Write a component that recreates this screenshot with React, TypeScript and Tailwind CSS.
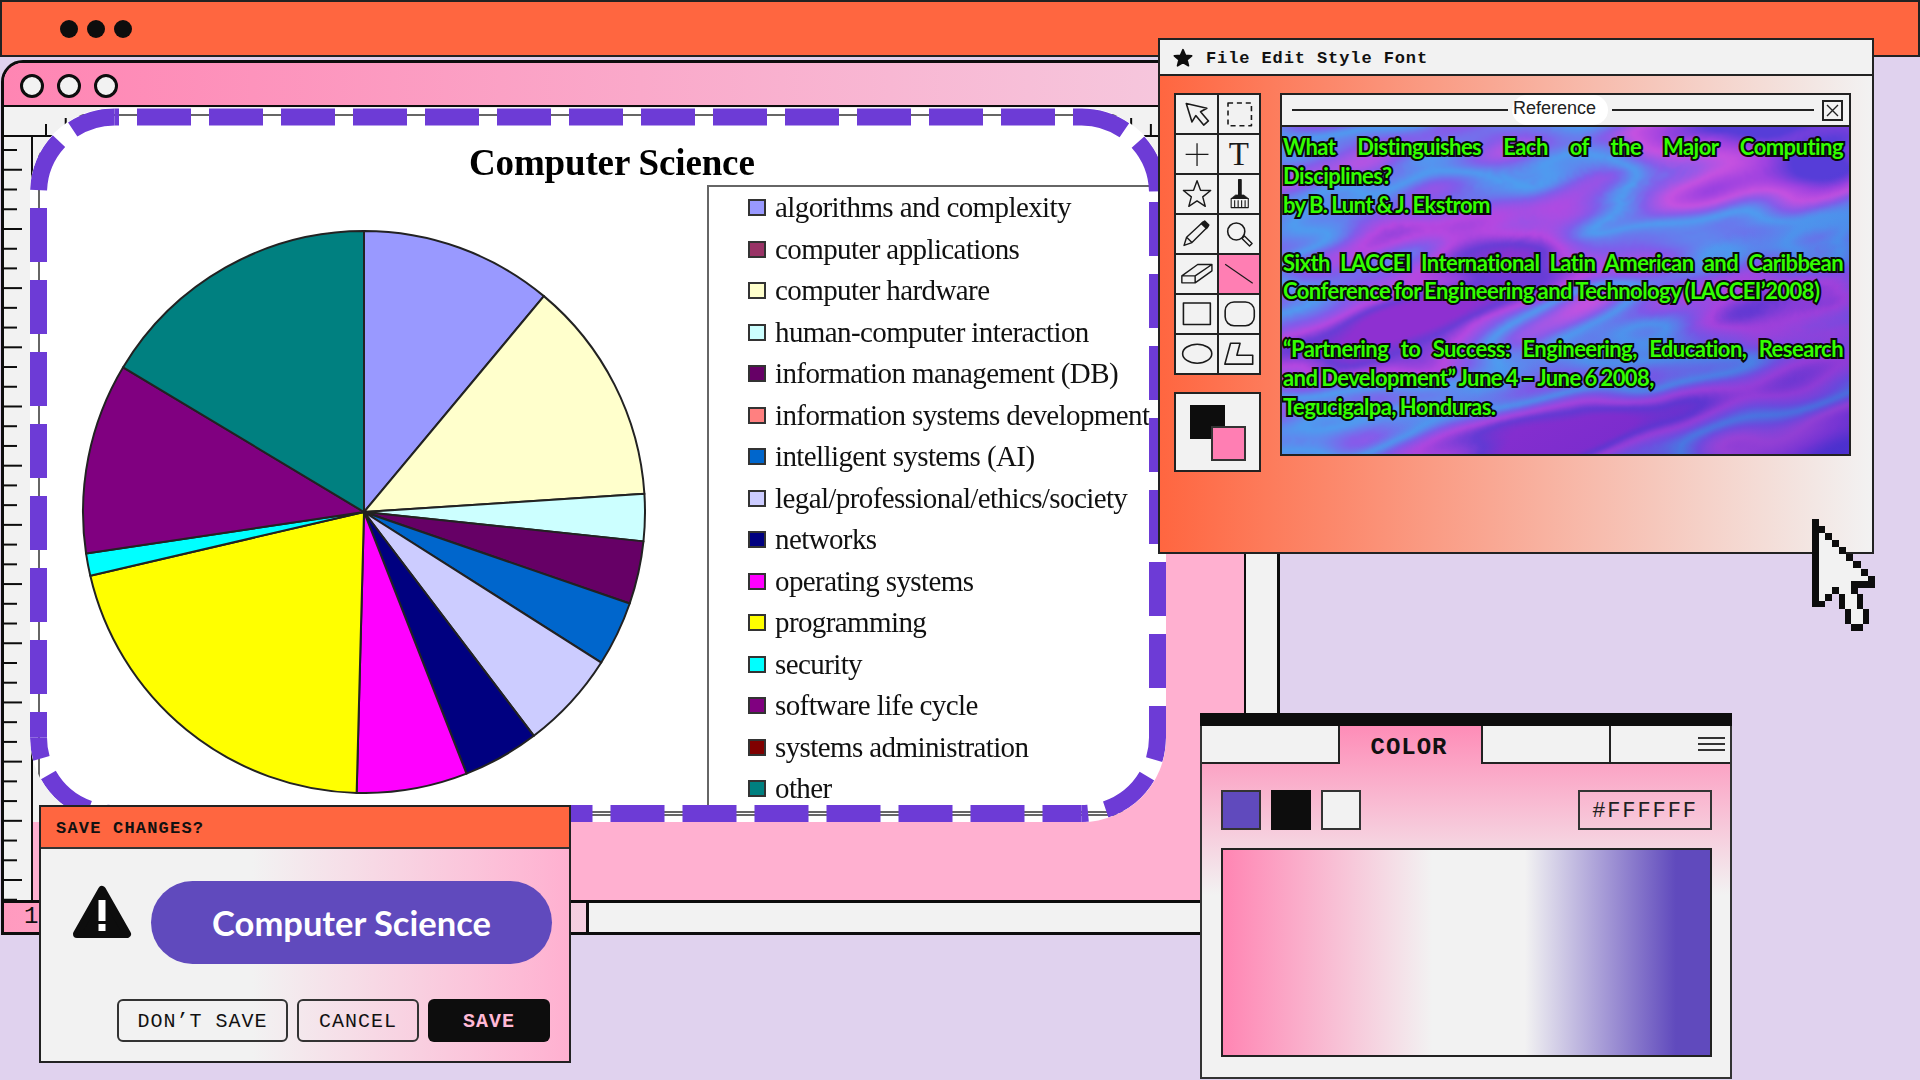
import type { ReactNode } from "react";

const slices = [
  { to: 39.8, color: "#9999FF" },
  { to: 86.3, color: "#FFFFCC" },
  { to: 96, color: "#CCFFFF" },
  { to: 109, color: "#660066" },
  { to: 122.4, color: "#0066CC" },
  { to: 142.8, color: "#CCCCFF" },
  { to: 158.6, color: "#000080" },
  { to: 181.5, color: "#FF00FF" },
  { to: 256.9, color: "#FFFF00" },
  { to: 261.5, color: "#00FFFF" },
  { to: 301, color: "#800080" },
  { to: 360, color: "#008080" },
];

const legend = [
  { label: "algorithms and complexity", color: "#9999FF" },
  { label: "computer applications", color: "#993366" },
  { label: "computer hardware", color: "#FFFFCC" },
  { label: "human-computer interaction", color: "#CCFFFF" },
  { label: "information management (DB)", color: "#660066" },
  { label: "information systems development", color: "#FF8080" },
  { label: "intelligent systems (AI)", color: "#0066CC" },
  { label: "legal/professional/ethics/society", color: "#CCCCFF" },
  { label: "networks", color: "#000080" },
  { label: "operating systems", color: "#FF00FF" },
  { label: "programming", color: "#FFFF00" },
  { label: "security", color: "#00FFFF" },
  { label: "software life cycle", color: "#800080" },
  { label: "systems administration", color: "#800000" },
  { label: "other", color: "#008080" },
];

function polar(deg: number, r: number) {
  const a = ((deg - 90) * Math.PI) / 180;
  return `${283 + r * Math.cos(a)} ${283 + r * Math.sin(a)}`;
}

function PieChart() {
  let from = 0;
  return (
    <svg width="566" height="566" viewBox="0 0 566 566" className="shrink-0 blur-[0.3px]">
      {slices.map((s) => {
        const large = s.to - from > 180 ? 1 : 0;
        const d = `M283 283 L${polar(from, 281)} A281 281 0 ${large} 1 ${polar(s.to, 281)} Z`;
        from = s.to;
        return <path key={s.color} d={d} fill={s.color} stroke="#222" strokeWidth="2" strokeLinejoin="round" />;
      })}
    </svg>
  );
}

function LeftRuler() {
  const ticks = Array.from({ length: 40 }, (_, i) => i);
  return (
    <svg width="27" height="766" className="shrink-0">
      {ticks.map((i) => (
        <line key={i} x1="0" x2={i % 3 === 1 ? 18 : 13} y1={13 + i * 19.73} y2={13 + i * 19.73} stroke="#0d0d0d" strokeWidth="2" />
      ))}
    </svg>
  );
}

function TopRuler() {
  const ticks = Array.from({ length: 60 }, (_, i) => i);
  return (
    <svg width="1242" height="28" className="block">
      {ticks.map((i) => (
        <line key={i} x1={42 + i * 19.73} x2={42 + i * 19.73} y1={i % 3 === 1 ? 11 : 17} y2="28" stroke="#0d0d0d" strokeWidth="2" />
      ))}
    </svg>
  );
}

// each side keeps its own dash phase, the picture's dashes don't run on evenly round the corners
const dashSides = [
  { d: "M84.5 9 H1051.5 A76 76 0 0 1 1127.5 85", offset: -22.5 },
  { d: "M1127.5 85 V629.5 A76 76 0 0 1 1051.5 705.5", offset: -9 },
  { d: "M1051.5 705.5 H84.5 A76 76 0 0 1 8.5 629.5", offset: 15 },
  { d: "M8.5 629.5 V85 A76 76 0 0 1 84.5 9", offset: 28.5 },
];

function ChartImage() {
  return (
    <div className="absolute left-[26px] top-[1px] w-[1136px] h-[714px] rounded-[84px] bg-white overflow-hidden">
      <div className="absolute left-[8px] top-[6px] w-[1140px] h-[702px] border-l-2 border-t-2 border-b-[5px] border-[#666] [border-bottom-style:double]" />
      <div className="relative flex flex-col [font-family:'Liberation_Serif',serif] text-black">
        <div className="h-[77px] pt-[32px] pl-[439px] text-[37px] leading-[46px] font-bold tracking-[-0.15px] blur-[0.4px]">
          Computer Science
        </div>
        <div className="flex items-start">
          <div className="ml-[51px] mt-[44px] w-[566px]">
            <PieChart />
          </div>
          <div className="ml-[60px] w-[460px] h-[640px] border-l-2 border-t-2 border-[#666] pl-[39px] blur-[0.4px]">
            {legend.map((item) => (
              <div key={item.label} className="flex items-center gap-[9px] h-[41.5px]">
                <span className="w-[18px] h-[17px] shrink-0 border-2 border-[#333]" style={{ backgroundColor: item.color }} />
                <span className="text-[29px] leading-none tracking-[-0.6px] whitespace-nowrap text-[#111]">{item.label}</span>
              </div>
            ))}
          </div>
        </div>
      </div>
      <svg width="1136" height="714" className="absolute left-0 top-0" fill="none" stroke="#6D3BD6" strokeWidth="17">
        {dashSides.map((side) => (
          <path key={side.d} d={side.d} strokeDasharray="54 18" strokeDashoffset={side.offset} />
        ))}
      </svg>
    </div>
  );
}

function MainWindow() {
  return (
    <div className="absolute left-[1px] top-[60px] w-[1279px] h-[875px] rounded-tl-[22px] border-[3px] border-[#0d0d0d] bg-[#FFB0D0] flex flex-col overflow-hidden">
      <div className="h-[44px] shrink-0 border-b-2 border-[#0d0d0d] bg-[linear-gradient(90deg,#FF85B3,#F5CDE1)] flex items-center gap-[13px] pl-[16px] pt-[4px]">
        <span className="w-[24px] h-[24px] rounded-full border-[3px] border-[#0d0d0d] bg-[#f2f2f2]" />
        <span className="w-[24px] h-[24px] rounded-full border-[3px] border-[#0d0d0d] bg-[#f2f2f2]" />
        <span className="w-[24px] h-[24px] rounded-full border-[3px] border-[#0d0d0d] bg-[#f2f2f2]" />
      </div>
      <div className="flex-1 flex min-h-0">
        <div className="relative flex-1 flex flex-col min-w-0">
          <div className="h-[30px] shrink-0 bg-[#f2f2f2] border-b-2 border-[#0d0d0d]">
            <TopRuler />
          </div>
          <div className="flex-1 flex min-h-0">
            <div className="w-[29px] shrink-0 bg-[#f2f2f2] border-r-2 border-[#0d0d0d] overflow-hidden">
              <LeftRuler />
            </div>
            <div className="flex-1" />
          </div>
          {/* grey backing that shows outside the rounded corners of the chart */}
          <div className="absolute left-[29px] top-[30px] w-[60px] h-[685px] bg-[#f2f2f2]" />
          <div className="absolute left-[29px] top-[30px] w-[1133px] h-[30px] bg-[#f2f2f2]" />
          <ChartImage />
        </div>
        <div className="w-[33px] shrink-0 bg-[#f2f2f2] border-l-2 border-[#0d0d0d]" />
      </div>
      <div className="h-[32px] shrink-0 flex border-t-[3px] border-[#0d0d0d]">
        <div className="w-[585px] bg-[linear-gradient(90deg,#FF9ABF,#f5cfe0)] border-r-[3px] border-[#0d0d0d] pl-[20px] text-[24px] leading-[28px] [font-family:'Liberation_Mono',monospace] text-[#111]">
          1
        </div>
        <div className="flex-1 bg-[#f2f2f2]" />
      </div>
    </div>
  );
}

function Tool({ children, active }: { children: ReactNode; active?: boolean }) {
  return (
    <div className={active ? "bg-[#FF7EB3] flex items-center justify-center" : "bg-[#f2f2f2] flex items-center justify-center"}>
      {children}
    </div>
  );
}

function ToolIcon({ children }: { children: ReactNode }) {
  return (
    <svg viewBox="0 0 127 120" className="w-full h-full block" fill="none" stroke="#1a1a1a" strokeWidth="5" strokeLinejoin="round">
      {children}
    </svg>
  );
}

function Toolbox() {
  return (
    <div className="w-[87px] h-[282px] bg-[#222] p-[2px] gap-[2px] grid grid-cols-2 grid-rows-7">
      <Tool>
        <ToolIcon>
          <path d="M32 27 L50 85 L62 65 L87 95 L102 82 L77 53 L97 42 Z" />
        </ToolIcon>
      </Tool>
      <Tool>
        <ToolIcon>
          <rect x="28" y="25" width="74" height="72" strokeDasharray="16 12" />
        </ToolIcon>
      </Tool>
      <Tool>
        <ToolIcon>
          <path d="M30 61 H102 M66 26 V98" strokeWidth="4" />
        </ToolIcon>
      </Tool>
      <Tool>
        <span className="[font-family:'Liberation_Serif',serif] text-[33px] leading-none text-[#1a1a1a]">T</span>
      </Tool>
      <Tool>
        <ToolIcon>
          <path d="M66 18 L77 48 L109 49 L84 69 L92 99 L66 82 L40 99 L48 69 L23 49 L55 48 Z" strokeWidth="4.5" />
        </ToolIcon>
      </Tool>
      <Tool>
        <ToolIcon>
          <path d="M62 15 H69 V63 H62 Z" fill="#1a1a1a" />
          <path d="M52 63 H78 L92 74 H38 Z" fill="#1a1a1a" strokeWidth="2" />
          <path d="M38 74 H92 V103 H38 Z M49 80 V103 M60 80 V103 M71 80 V103 M82 80 V103" strokeWidth="3.5" />
        </ToolIcon>
      </Tool>
      <Tool>
        <ToolIcon>
          <path d="M25 96 L33 70 L85 22 L100 37 L50 87 Z M33 70 L50 87" strokeWidth="4.5" />
          <path d="M80 27 L90 19 L103 32 L96 42 Z" fill="#1a1a1a" />
        </ToolIcon>
      </Tool>
      <Tool>
        <ToolIcon>
          <circle cx="54" cy="52" r="27" />
          <path d="M72 74 L80 66 L104 90 L96 98 Z" strokeWidth="4.5" />
        </ToolIcon>
      </Tool>
      <Tool>
        <ToolIcon>
          <path d="M18 66 L68 30 H113 V50 L60 88 H18 Z M18 66 H60 L113 30 M60 66 V88" strokeWidth="4.5" />
        </ToolIcon>
      </Tool>
      <Tool active>
        <ToolIcon>
          <path d="M19 29 L106 89" strokeWidth="3.5" />
        </ToolIcon>
      </Tool>
      <Tool>
        <ToolIcon>
          <rect x="23" y="25" width="85" height="68" />
        </ToolIcon>
      </Tool>
      <Tool>
        <ToolIcon>
          <rect x="19" y="22" width="92" height="75" rx="28" />
        </ToolIcon>
      </Tool>
      <Tool>
        <ToolIcon>
          <ellipse cx="66.5" cy="59" rx="46" ry="30" />
        </ToolIcon>
      </Tool>
      <Tool>
        <ToolIcon>
          <path d="M36 26 H66 L56 64 H106 V92 H18 Z" />
        </ToolIcon>
      </Tool>
    </div>
  );
}

function Marble() {
  return (
    <svg className="absolute inset-0 w-full h-full">
      <defs>
        <filter id="marble" x="0" y="0" width="100%" height="100%" colorInterpolationFilters="sRGB">
          <feTurbulence type="fractalNoise" baseFrequency="0.0028 0.0085" numOctaves="3" seed="23" />
          <feColorMatrix values="2.2 0 0 0 -0.6  2.2 0 0 0 -0.6  2.2 0 0 0 -0.6  0 0 0 0 1" />
          <feComponentTransfer>
            <feFuncR type="table" tableValues="0.34 0.62 0.78 0.52 0.30 0.50 0.72 0.40 0.56" />
            <feFuncG type="table" tableValues="0.24 0.26 0.32 0.36 0.62 0.36 0.28 0.24 0.19" />
            <feFuncB type="table" tableValues="0.85 0.88 0.88 0.92 0.94 0.92 0.88 0.84 0.82" />
          </feComponentTransfer>
          <feGaussianBlur stdDeviation="1.5" />
        </filter>
        <linearGradient id="marble-shade" x1="0" y1="0" x2="1" y2="1">
          <stop offset="0.55" stopColor="#3a20c0" stopOpacity="0" />
          <stop offset="1" stopColor="#3a20c0" stopOpacity="0.45" />
        </linearGradient>
      </defs>
      <g transform="rotate(-14 285 165)">
        <rect x="-120" y="-180" width="820" height="700" filter="url(#marble)" />
      </g>
      <rect width="100%" height="100%" fill="url(#marble-shade)" />
    </svg>
  );
}

function Line({ text, fill }: { text: string; fill?: boolean }) {
  return (
    <div className={fill ? "h-[28.9px] [text-align-last:justify]" : "h-[28.9px] [word-spacing:-1px]"}>{text}</div>
  );
}

function ReferencePanel() {
  return (
    <div className="w-[571px] h-[363px] border-2 border-[#222] flex flex-col">
      <div className="h-[32px] shrink-0 bg-[#f2f2f2] border-b-2 border-[#222] flex items-center pl-[10px] pr-[6px]">
        <span className="w-[216px] h-[2px] bg-[#222]" />
        <span className="mx-[4px] w-[96px] h-[30px] pl-[1px] bg-white rounded-full text-[18px] leading-[26px] text-[#222] [font-family:'Liberation_Sans',sans-serif]">
          Reference
        </span>
        <span className="w-[202px] h-[2px] bg-[#222]" />
        <span className="ml-auto w-[21px] h-[21px] border-2 border-[#222] flex items-center justify-center">
          <svg width="13" height="13" viewBox="0 0 13 13" stroke="#222" strokeWidth="1.4">
            <path d="M1 1 L12 12 M12 1 L1 12" />
          </svg>
        </span>
      </div>
      <div className="relative flex-1 overflow-hidden">
        <Marble />
        <div className="relative pl-[1px] pr-[6px] pt-[6px] text-[22px] leading-[28.9px] font-bold tracking-[-0.55px] text-[#33FF00] [font-family:'Lato',sans-serif] [-webkit-text-stroke:4px_#0a0a0a] [paint-order:stroke_fill] whitespace-nowrap">
          <Line text="What Distinguishes Each of the Major Computing" fill />
          <Line text="Disciplines?" />
          <Line text="by B. Lunt & J. Ekstrom" />
          <Line text=" " />
          <Line text="Sixth LACCEI International Latin American and Caribbean" fill />
          <Line text="Conference for Engineering and Technology (LACCEI’2008)" />
          <Line text=" " />
          <Line text="“Partnering to Success: Engineering, Education, Research" fill />
          <Line text="and Development” June 4 – June 6 2008," />
          <Line text="Tegucigalpa, Honduras." />
        </div>
      </div>
    </div>
  );
}

function EditorWindow() {
  return (
    <div className="absolute left-[1158px] top-[38px] w-[716px] h-[516px] border-2 border-[#222] flex flex-col bg-[linear-gradient(90deg,#FF6640,#f2f2f2)]">
      <div className="h-[36px] shrink-0 bg-[#f2f2f2] border-b-2 border-[#222] flex items-center pl-[13px] gap-[13px] [font-family:'Liberation_Mono',monospace] font-bold text-[17px] tracking-[0.9px] text-[#111] whitespace-pre">
        <svg width="20" height="19" viewBox="0 0 24 23" fill="#0d0d0d" stroke="#0d0d0d" strokeWidth="2" strokeLinejoin="round">
          <path d="M12 2 L15 9 L22.5 9.5 L16.8 14.3 L18.6 21.5 L12 17.6 L5.4 21.5 L7.2 14.3 L1.5 9.5 L9 9 Z" />
        </svg>
        <span className="pt-[3px]">File Edit Style Font</span>
      </div>
      <div className="flex gap-[19px] pl-[14px] pt-[17px]">
        <div className="flex flex-col gap-[17px]">
          <Toolbox />
          <div className="relative w-[87px] h-[80px] bg-[#f2f2f2] border-2 border-[#222]">
            <span className="absolute left-[14px] top-[11px] w-[35px] h-[34px] bg-[#0d0d0d]" />
            <span className="absolute left-[35px] top-[32px] w-[35px] h-[35px] bg-[#FF7EB3] border-2 border-[#333]" />
          </div>
        </div>
        <ReferencePanel />
      </div>
    </div>
  );
}

function SaveDialog() {
  return (
    <div className="absolute left-[39px] top-[805px] w-[532px] h-[258px] border-2 border-[#222] flex flex-col bg-[linear-gradient(90deg,#f2f2f2_40%,#FFB0D0_100%)]">
      <div className="h-[42px] shrink-0 pt-[3px] bg-[#FF6640] border-b-2 border-[#333] flex items-center pl-[15px] [font-family:'Liberation_Mono',monospace] font-bold text-[17px] tracking-[1.2px] text-[#111]">
        SAVE CHANGES?
      </div>
      <div className="flex items-start pl-[31px] pt-[32px]">
        <svg width="60" height="54" viewBox="0 0 60 54" className="shrink-0 mt-[4px]">
          <path d="M30 5 L55 49 H5 Z" fill="#0d0d0d" stroke="#0d0d0d" strokeWidth="8" strokeLinejoin="round" />
          <rect x="26.5" y="15" width="7" height="21" fill="#fff" />
          <rect x="26.5" y="39" width="7" height="7" fill="#fff" />
        </svg>
        <div className="ml-[19px] w-[401px] h-[83px] rounded-full bg-[#604ABD] flex items-center justify-center text-white text-[34.5px] font-bold [font-family:'Lato',sans-serif]">
          Computer Science
        </div>
      </div>
      <div className="flex gap-[9px] pl-[76px] pt-[35px] [font-family:'Liberation_Mono',monospace] text-[20px] tracking-[1px] text-[#111]">
        <button className="w-[171px] h-[43px] pt-[2px] rounded-[6px] border-2 border-[#333]">DON’T SAVE</button>
        <button className="w-[122px] h-[43px] pt-[2px] rounded-[6px] border-2 border-[#333]">CANCEL</button>
        <button className="w-[122px] h-[43px] pt-[2px] rounded-[6px] bg-[#0d0d0d] text-[#FFB9D6] font-bold">SAVE</button>
      </div>
    </div>
  );
}

function ColorPanel() {
  return (
    <div className="absolute left-[1200px] top-[713px] w-[532px] h-[366px] border-2 border-[#333] border-t-0 flex flex-col bg-[linear-gradient(180deg,#FF85B3_0%,#f2f2f2_50%)]">
      <div className="h-[13px] -mx-[2px] shrink-0 bg-[#0d0d0d]" />
      <div className="flex h-[38px] shrink-0 [font-family:'Liberation_Mono',monospace]">
        <div className="w-[138px] bg-[#f2f2f2] border-b-2 border-r-2 border-[#222]" />
        <div className="w-[141px] pt-[5px] pr-[3px] flex items-center justify-center text-[24px] font-bold tracking-[1px] text-[#111]">COLOR</div>
        <div className="w-[130px] bg-[#f2f2f2] border-b-2 border-l-2 border-r-2 border-[#222]" />
        <div className="flex-1 bg-[#f2f2f2] border-b-2 border-[#222] flex flex-col items-end justify-center gap-[4px] pr-[5px]">
          <span className="w-[27px] h-[2px] bg-[#333]" />
          <span className="w-[27px] h-[2px] bg-[#333]" />
          <span className="w-[27px] h-[2px] bg-[#333]" />
        </div>
      </div>
      <div className="flex items-center gap-[10px] pl-[19px] pr-[18px] pt-[26px]">
        <span className="w-[40px] h-[40px] bg-[#604ABD] border-2 border-[#333]" />
        <span className="w-[40px] h-[40px] bg-[#0d0d0d]" />
        <span className="w-[40px] h-[40px] bg-[#f2f2f2] border-2 border-[#333]" />
        <span className="ml-auto w-[134px] h-[40px] pt-[2px] border-2 border-[#333] flex items-center justify-center text-[22px] tracking-[1.9px] text-[#222] [font-family:'Liberation_Mono',monospace]">
          #FFFFFF
        </span>
      </div>
      <div className="ml-[19px] mt-[18px] mr-[18px] h-[209px] border-2 border-[#222] bg-[linear-gradient(90deg,#FF85B3_0%,#f2f2f2_43%,#f2f2f2_62%,#604ABD_93%)]" />
    </div>
  );
}

function PixelCursor() {
  return (
    <svg width="63.5" height="112" viewBox="96 56 190 335" shapeRendering="crispEdges" className="absolute left-[1812px] top-[519px]">
      <path d="M117 78 L135 97 L157 118 L178 139 L199 161 L220 182 L242 203 L264 225 L264 240 L213 240 L213 279 L232 279 L232 325 L250 325 L250 370 L213 370 L213 325 L195 325 L195 279 L176 279 L176 258 L155 258 L155 279 L135 279 L135 300 L117 300 Z" fill="#f2f2f2" />
      <path
        fill="#0d0d0d"
        d="M96 56 H117 V78 H135 V98 H117 V300 H135 V279 H155 V258 H176 V279 H195 V325 H212 V370 H250 V325 H232 V279 H213 V240 H264 V227 H285 V261 H234 V279 H250 V325 H267 V370 H250 V390 H213 V370 H195 V325 H176 V279 H155 V300 H135 V318 H96 Z M135 98 H157 V118 H135 Z M157 120 H178 V139 H157 Z M178 140 H199 V161 H178 Z M199 161 H220 V182 H199 Z M220 183 H242 V203 H220 Z M242 205 H264 V225 H242 Z"
      />
    </svg>
  );
}

export default function App() {
  return (
    <div className="relative w-[1920px] h-[1080px] overflow-hidden bg-[#E0D2EE]">
      <div className="h-[57px] border-2 border-[#222] bg-[#FF6640] flex items-center gap-[9px] pl-[58px]">
        <span className="w-[18px] h-[18px] rounded-full bg-[#0d0d0d]" />
        <span className="w-[18px] h-[18px] rounded-full bg-[#0d0d0d]" />
        <span className="w-[18px] h-[18px] rounded-full bg-[#0d0d0d]" />
      </div>
      <MainWindow />
      <EditorWindow />
      <ColorPanel />
      <SaveDialog />
      <PixelCursor />
    </div>
  );
}
